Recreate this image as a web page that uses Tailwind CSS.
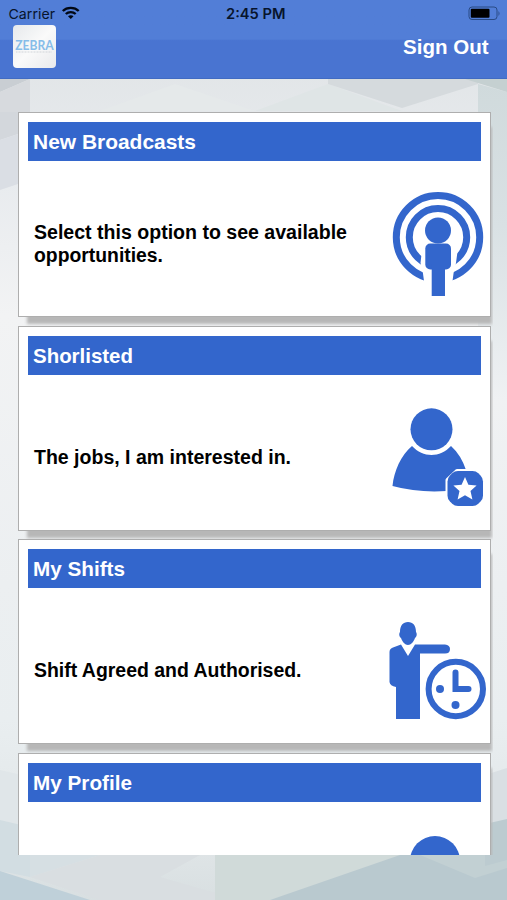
<!DOCTYPE html>
<html lang="en">
<head>
<meta charset="utf-8">
<title>Home</title>
<script src="https://cdn.jsdelivr.net/npm/@tailwindcss/browser@4"></script>
</head>
<body class="w-[507px] h-[900px] overflow-hidden font-['Liberation_Sans',Arial,sans-serif] font-bold">
<main class="relative isolate flex h-[900px] w-[507px] flex-col overflow-hidden bg-[#eef0f2]">
  <!-- faceted backdrop -->
  <svg class="absolute inset-0 -z-10" width="507" height="900" viewBox="0 0 507 900">
    <defs>
      <linearGradient id="bg" x1="0" y1="0" x2="0" y2="1"><stop offset="0" stop-color="#dee2e4"/><stop offset=".2" stop-color="#e8ebee"/><stop offset=".35" stop-color="#f2f3f4"/><stop offset=".65" stop-color="#eceff1"/><stop offset=".8" stop-color="#e9eef0"/><stop offset=".93" stop-color="#e1e6e8"/><stop offset="1" stop-color="#d8dfe1"/></linearGradient>
      <linearGradient id="side" x1="0" y1="0" x2="0" y2="1"><stop offset="0" stop-color="#d0dadc"/><stop offset=".45" stop-color="#d9e1e4"/><stop offset="1" stop-color="#eff1f3"/></linearGradient>
    </defs>
    <rect width="507" height="900" fill="url(#bg)"/>
    <path d="M0 79H30L0 92Z" fill="#c9ced3"/>
    <path d="M30 79V112H0V92Z" fill="#d7dade"/>
    <path d="M100 111L175 84L255 111Z" fill="#e5e9ea"/>
    <path d="M255 111L328 84L402 111Z" fill="#dfe5e6"/>
    <path d="M328 84L402 108L478 84V79H328Z" fill="#d5dadd"/>
    <path d="M478 84L507 92V400H478Z" fill="url(#side)"/>
    <path d="M465 79H507V92Z" fill="#c5d0d1"/>
    <path d="M0 112H30V130L0 140Z" fill="#d3d7dc"/>
    <path d="M0 140L30 130V180L0 190Z" fill="#dadee4"/>
    <path d="M0 770L30 777V826L0 820Z" fill="#e0e6e9"/>
    <path d="M0 820L30 827V877L0 871Z" fill="#d2dde2"/>
    <path d="M30 855H100L30 877Z" fill="#d6dfe3"/>
    <path d="M0 871L90 900H0Z" fill="#bfd0d9"/>
    <path d="M30 877L100 855H200L160 877L240 900H100Z" fill="#d9dee1"/>
    <path d="M215 855H420L270 900H215Z" fill="#d0dad9"/>
    <path d="M270 900L400 855H507V900Z" fill="#b9c9cf"/>
    <path d="M420 855H507V868L475 878Z" fill="#c2d0d3"/>
    <path d="M485 775L507 768V820L485 824Z" fill="#d9dfe3"/>
    <path d="M485 824L507 819V860L485 866Z" fill="#bccbd0"/>
  </svg>

  <header class="h-[79px] shrink-0 border-b border-[#416bc2] bg-linear-to-b from-[#527ed7] from-[50%] to-[#4974d1] to-[52%]">
    <div class="flex h-[26px] items-center justify-between pr-[6px] pl-[8px] font-['Inter',sans-serif] text-[#07142c]">
      <svg width="72" height="22" viewBox="0 0 72 22"><text x="0.500" y="17" textLength="46.500" lengthAdjust="spacingAndGlyphs" font-size="13.500" font-weight="400" fill="#07142c">Carrier</text><g fill="none" stroke="#020814" stroke-width="2.300"><path d="M54.800 9C59 4.800 66.500 4.800 70.700 9M57.800 12C60.500 9.400 65 9.400 67.700 12"/><path d="M60 14.200C61.500 12.800 64 12.800 65.500 14.200L62.750 17Z" fill="#020814" stroke="none"/></g></svg>
      <svg class="mr-[36px]" width="62" height="22" viewBox="0 0 62 22"><text x="1" y="16.700" textLength="59.500" lengthAdjust="spacingAndGlyphs" font-size="14" font-weight="600" fill="#07142c">2:45 PM</text></svg>
      <svg class="mt-px" width="33" height="15" viewBox="0 0 33 15"><rect x="1" y="1" width="28" height="12.500" rx="3" fill="none" stroke="#294a85"/><rect x="2.800" y="2.800" width="18.700" height="9" rx="1"/><path d="M30.500 5V10Q32.500 7.500 30.500 5Z" fill="#294a85"/></svg>
    </div>
    <div class="flex items-start justify-between pl-[13px] pr-[18px]">
      <div class="-mt-px flex h-[43px] w-[43px] items-start justify-center rounded-[4px] bg-linear-to-br from-[#e6e9ec] via-[#fafafa] to-[#e9eaec] pt-[10px]">
        <svg width="43" height="22" viewBox="0 0 43 22"><text x="2.200" y="15.300" textLength="38.500" lengthAdjust="spacingAndGlyphs" font-family="Lato, sans-serif" font-weight="700" font-size="13.500" fill="#86bde9">ZEBRA</text><path d="M3 17H39" stroke="#c8cdd2" stroke-width=".8" stroke-dasharray="1 .5"/></svg>
      </div>
      <svg class="mt-[8px]" width="87" height="28"><text x="1" y="20" textLength="85.500" lengthAdjust="spacingAndGlyphs" font-size="20.500" fill="#fff">Sign Out</text></svg>
    </div>
  </header>

  <div class="mt-[33px] ml-[18px] flex h-[743px] w-[475px] shrink-0 flex-col gap-[8.700px] overflow-hidden">
    <section class="flex h-[205px] w-[473px] shrink-0 flex-col border border-[#aeaeae] bg-white px-[9px] pt-[9px] shadow-[5px_11px_3px_-4px_#b7b7b7]">
      <h2 class="h-[39px] shrink-0 bg-[#3366cc]"><svg width="300" height="39"><text x="5" y="26.700" textLength="163" lengthAdjust="spacingAndGlyphs" font-size="20.500" fill="#fff">New Broadcasts</text></svg></h2>
      <div class="flex h-[155px] items-start justify-between">
        <svg class="mt-[59px]" width="340" height="60" font-size="19.400"><text x="6" y="18.700" textLength="313" lengthAdjust="spacingAndGlyphs">Select this option to see available</text><text x="6" y="41.700" textLength="129" lengthAdjust="spacingAndGlyphs">opportunities.</text></svg>
        <svg class="-mr-[3px] mt-[30px] shrink-0" width="92" height="107" viewBox="392 191 92 107"><g fill="none" stroke="#3366cc" stroke-width="7"><circle cx="438" cy="237.300" r="41.700"/><circle cx="438" cy="237.300" r="28.700"/></g><path d="M422 250L420.500 263L422.500 270L424 281V286H452.500V281L454 270L456 263L457.700 250Z" fill="#fff"/><g fill="#3366cc"><circle cx="438" cy="230.500" r="13"/><rect x="425.300" y="243.500" width="25.700" height="26" rx="5"/><path d="M431.700 264H445V296H431.700Z"/></g></svg>
      </div>
    </section>

    <section class="flex h-[205px] w-[473px] shrink-0 flex-col border border-[#aeaeae] bg-white px-[9px] pt-[9px] shadow-[5px_11px_3px_-4px_#b7b7b7]">
      <h2 class="h-[39px] shrink-0 bg-[#3366cc]"><svg width="300" height="39"><text x="5" y="26.700" textLength="100" lengthAdjust="spacingAndGlyphs" font-size="20.500" fill="#fff">Shorlisted</text></svg></h2>
      <div class="flex h-[155px] items-start justify-between">
        <svg class="mt-[70px]" width="340" height="40" font-size="19.400"><text x="6" y="19" textLength="257" lengthAdjust="spacingAndGlyphs">The jobs, I am interested in.</text></svg>
        <svg class="-mr-[3px] mt-[30px] shrink-0" width="92" height="104" viewBox="392 405 92 104"><g fill="#3366cc"><circle cx="431.500" cy="429.300" r="21"/><path d="M412 446C401 455 394 471 392.500 486Q418 493 447 491L466 470Q461 455 451 446C440 458 423 458 412 446Z"/><path d="M457 471H473.500L483 480V496.500L473.500 506H457L447.500 496.500V480Z" stroke="#fff" stroke-width="4" stroke-linejoin="round"/><path d="M458 471H472.500Q476 471 478.300 473.300L480.700 475.700Q483 478 483 481.500V495.500Q483 499 480.700 501.300L478.300 503.700Q476 506 472.500 506H458Q454.500 506 452.200 503.700L449.800 501.300Q447.500 499 447.500 495.500V481.500Q447.500 478 449.800 475.700L452.200 473.300Q454.500 471 458 471Z"/></g><path d="M465 477L468.400 484.800L476.600 485.500L470.500 491L472.400 499.500L465 495.200L457.600 499.500L459.500 491L453.400 485.500L461.600 484.800Z" fill="#fff"/></svg>
      </div>
    </section>

    <section class="flex h-[205px] w-[473px] shrink-0 flex-col border border-[#aeaeae] bg-white px-[9px] pt-[9px] shadow-[5px_11px_3px_-4px_#b7b7b7]">
      <h2 class="h-[39px] shrink-0 bg-[#3366cc]"><svg width="300" height="39"><text x="5" y="26.700" textLength="92" lengthAdjust="spacingAndGlyphs" font-size="20.500" fill="#fff">My Shifts</text></svg></h2>
      <div class="flex h-[155px] items-start justify-between">
        <svg class="mt-[70px]" width="340" height="40" font-size="19.400"><text x="6" y="19.300" textLength="267.500" lengthAdjust="spacingAndGlyphs">Shift Agreed and Authorised.</text></svg>
        <svg class="-mr-[6px] mt-[30.500px] shrink-0" width="99" height="104" viewBox="388 619 99 104"><g fill="#3366cc"><path d="M408 622C413 622 416 625.500 416 632C417.500 634 416.500 637 415 638C413.500 642 411 645 408 645C405 645 402.500 642 401 638C399.500 637 398.500 634 400 632C400 625.500 403 622 408 622Z"/><path d="M401 644.500L408 656L415 644.500H445Q450 645 450 649Q450 653.500 445 653.500H420V719H396V687Q390 686 389.500 682V652Q389.500 648.500 393 647.500Z"/><circle cx="440" cy="689" r="4"/><circle cx="455.500" cy="705" r="4"/></g><circle cx="455.800" cy="689" r="27.200" fill="none" stroke="#3366cc" stroke-width="6"/><path d="M455.500 672.500V689H468.500" fill="none" stroke="#3366cc" stroke-width="6" stroke-linecap="round"/></svg>
      </div>
    </section>

    <section class="flex h-[205px] w-[473px] shrink-0 flex-col border border-[#aeaeae] bg-white px-[9px] pt-[9px] shadow-[5px_11px_3px_-4px_#b7b7b7]">
      <h2 class="h-[39px] shrink-0 bg-[#3366cc]"><svg width="300" height="39"><text x="5" y="26.700" textLength="99" lengthAdjust="spacingAndGlyphs" font-size="20.500" fill="#fff">My Profile</text></svg></h2>
      <div class="flex h-[155px] items-start justify-end pr-[21px] pt-[34px]">
        <div class="h-[50px] w-[50px] rounded-full bg-[#3366cc]"></div>
      </div>
    </section>
  </div>
</main>
</body>
</html>
